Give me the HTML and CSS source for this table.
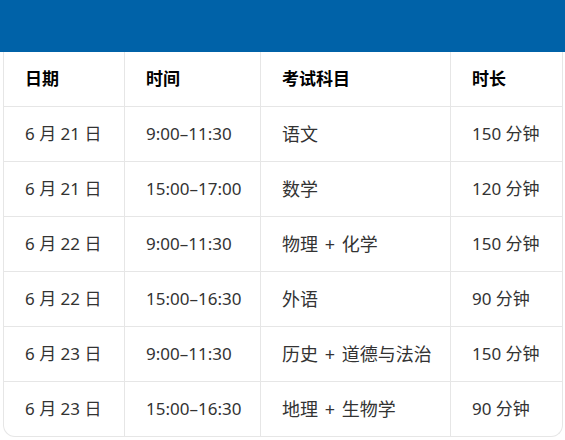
FILE: index.html
```html
<!DOCTYPE html>
<html lang="zh-CN">
<head>
<meta charset="utf-8">
<link rel="stylesheet" href="styles.css">
</head>
<body>
<header class="topbar"></header>
<div class="card">
  <table class="schedule">
    <colgroup>
      <col class="c1"><col class="c2"><col class="c3"><col class="c4">
    </colgroup>
    <thead>
      <tr><th>日期</th><th>时间</th><th>考试科目</th><th>时长</th></tr>
    </thead>
    <tbody>
      <tr><td>6 月 21 日</td><td>9:00–11:30</td><td class="subj">语文</td><td>150 分钟</td></tr>
      <tr><td>6 月 21 日</td><td>15:00–17:00</td><td class="subj">数学</td><td>120 分钟</td></tr>
      <tr><td>6 月 22 日</td><td>9:00–11:30</td><td class="subj">物理 + 化学</td><td>150 分钟</td></tr>
      <tr><td>6 月 22 日</td><td>15:00–16:30</td><td class="subj">外语</td><td>90 分钟</td></tr>
      <tr><td>6 月 23 日</td><td>9:00–11:30</td><td class="subj">历史 + 道德与法治</td><td>150 分钟</td></tr>
      <tr><td>6 月 23 日</td><td>15:00–16:30</td><td class="subj">地理 + 生物学</td><td>90 分钟</td></tr>
    </tbody>
  </table>
</div>
</body>
</html>
```
FILE: styles.css
```css
html, body {
  margin: 0;
  padding: 0;
  background: #ffffff;
}
body {
  font-family: "Noto Sans", "Noto Sans CJK SC", sans-serif;
  color: #333333;
}
.topbar {
  height: 52px;
  background: #0062a8;
}
.card {
  margin: 0 2px 0 3px;
  border: 1px solid #e6e6e6;
  border-top: none;
  border-radius: 0 0 12px 12px;
  overflow: hidden;
}
.schedule {
  width: 100%;
  table-layout: fixed;
  border-collapse: separate;
  border-spacing: 0;
}
.c1 { width: 121px; }
.c2 { width: 136px; }
.c3 { width: 190px; }
.schedule th,
.schedule td {
  padding: 16px 18px 16px 21px;
  line-height: 22px;
  font-size: 17px;
  text-align: left;
  border-right: 1px solid #e6e6e6;
  border-bottom: 1px solid #e6e6e6;
  white-space: nowrap;
}
.schedule td.subj {
  font-size: 18px;
  word-spacing: 2px;
}
.schedule th {
  font-weight: 700;
  color: #000000;
}
.schedule th:last-child,
.schedule td:last-child {
  border-right: none;
}
.schedule tbody tr:last-child td {
  border-bottom: none;
}
```
